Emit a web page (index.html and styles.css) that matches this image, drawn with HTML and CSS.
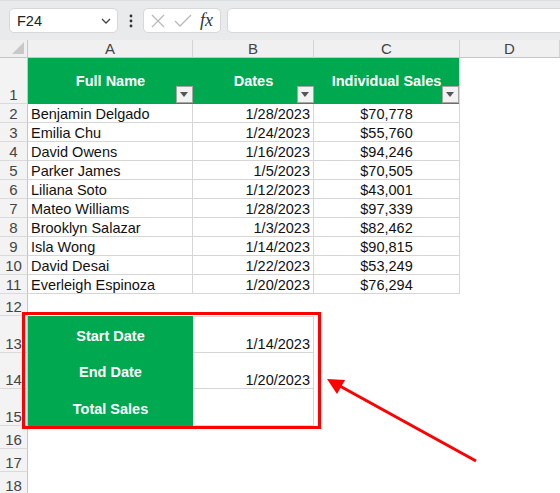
FILE: index.html
```html
<!DOCTYPE html>
<html lang="en">
<head>
    <meta charset="UTF-8">
    <title>Sales sheet</title>
    <link rel="stylesheet" href="styles.css">
</head>
<body>
    <div class="toolbar">
        <div class="name-box">
            <span>F24</span>
            <svg class="chevron" width="10" height="6" viewBox="0 0 10 6"><path d="M1 1 L5 5 L9 1" fill="none" stroke="#444" stroke-width="1.3"/></svg>
        </div>
        <div class="more">
            <svg width="4" height="14" viewBox="0 0 4 14"><circle cx="2" cy="2" r="1.4" fill="#333"/><circle cx="2" cy="7" r="1.4" fill="#333"/><circle cx="2" cy="12" r="1.4" fill="#333"/></svg>
        </div>
        <div class="fx-box">
            <svg width="14" height="14" viewBox="0 0 14 14"><path d="M1 1 L13 13 M13 1 L1 13" stroke="#b9b9b9" stroke-width="1.3"/></svg>
            <svg width="18" height="14" viewBox="0 0 18 14"><path d="M1 7 L6 12 L17 1" fill="none" stroke="#b9b9b9" stroke-width="1.3"/></svg>
            <span class="fx">fx</span>
        </div>
        <div class="formula"></div>
    </div>

    <div class="sheet">
        <div class="corner"><svg width="12" height="12" viewBox="0 0 12 12"><path d="M12 0 L12 12 L0 12 Z" fill="#c8c8c8"/></svg></div>
        <div class="ch">A</div>
        <div class="ch">B</div>
        <div class="ch">C</div>
        <div class="ch">D</div>

        <div class="rh">1</div>
        <div class="g">Full Name<span class="filter"></span></div>
        <div class="g">Dates<span class="filter"></span></div>
        <div class="g g-last">Individual Sales<span class="filter"></span></div>
        <div class="c"></div>

        <div class="rh">2</div><div class="t">Benjamin Delgado</div><div class="t num">1/28/2023</div><div class="t mid">$70,778</div><div class="c"></div>
        <div class="rh">3</div><div class="t">Emilia Chu</div><div class="t num">1/24/2023</div><div class="t mid">$55,760</div><div class="c"></div>
        <div class="rh">4</div><div class="t">David Owens</div><div class="t num">1/16/2023</div><div class="t mid">$94,246</div><div class="c"></div>
        <div class="rh">5</div><div class="t">Parker James</div><div class="t num">1/5/2023</div><div class="t mid">$70,505</div><div class="c"></div>
        <div class="rh">6</div><div class="t">Liliana Soto</div><div class="t num">1/12/2023</div><div class="t mid">$43,001</div><div class="c"></div>
        <div class="rh">7</div><div class="t">Mateo Williams</div><div class="t num">1/28/2023</div><div class="t mid">$97,339</div><div class="c"></div>
        <div class="rh">8</div><div class="t">Brooklyn Salazar</div><div class="t num">1/3/2023</div><div class="t mid">$82,462</div><div class="c"></div>
        <div class="rh">9</div><div class="t">Isla Wong</div><div class="t num">1/14/2023</div><div class="t mid">$90,815</div><div class="c"></div>
        <div class="rh">10</div><div class="t">David Desai</div><div class="t num">1/22/2023</div><div class="t mid">$53,249</div><div class="c"></div>
        <div class="rh">11</div><div class="t">Everleigh Espinoza</div><div class="t num">1/20/2023</div><div class="t mid">$76,294</div><div class="c"></div>

        <div class="rh">12</div><div class="c"></div><div class="c"></div><div class="c"></div><div class="c"></div>

        <div class="rh">13</div><div class="gl">Start Date</div><div class="t num first">1/14/2023</div><div class="c"></div><div class="c"></div>
        <div class="rh">14</div><div class="gl">End Date</div><div class="t num">1/20/2023</div><div class="c"></div><div class="c"></div>
        <div class="rh">15</div><div class="gl">Total Sales</div><div class="t num"></div><div class="c"></div><div class="c"></div>

        <div class="rh">16</div><div class="c"></div><div class="c"></div><div class="c"></div><div class="c"></div>
        <div class="rh">17</div><div class="c"></div><div class="c"></div><div class="c"></div><div class="c"></div>
        <div class="rh">18</div><div class="c"></div><div class="c"></div><div class="c"></div><div class="c"></div>
    </div>

    <div class="highlight"></div>
    <svg class="arrow" width="560" height="493" viewBox="0 0 560 493">
        <line x1="476" y1="461" x2="338" y2="385" stroke="#ff0000" stroke-width="3"/>
        <polygon points="327,379 345,380 337,394" fill="#ff0000"/>
    </svg>
</body>
</html>
```

FILE: styles.css
```css
body {
    margin: 0;
    width: 560px;
    height: 493px;
    overflow: hidden;
    position: relative;
    font-family: "Liberation Sans", Arial, sans-serif;
    background: #fff;
}

.toolbar {
    display: flex;
    align-items: flex-start;
    height: 40px;
    box-sizing: border-box;
    padding: 7px 0 0 9px;
    background: #e8eaec;
    border-top: 1px solid #dcdee0;
}

.name-box,
.fx-box,
.formula {
    height: 25px;
    box-sizing: border-box;
    background: #fff;
    border: 1px solid #d6d8da;
    border-radius: 5px;
}

.name-box {
    width: 109px;
    display: flex;
    align-items: center;
    justify-content: space-between;
    padding: 0 6px 0 7px;
    font-size: 14.5px;
    color: #222;
}

.more {
    width: 25px;
    height: 25px;
    display: flex;
    align-items: center;
    justify-content: center;
}

.fx-box {
    width: 78px;
    display: flex;
    align-items: center;
    padding: 0 0 0 7px;
    gap: 9px;
}

.fx {
    font-family: "Liberation Serif", "Times New Roman", serif;
    font-style: italic;
    font-size: 18px;
    color: #333;
    margin-left: -1px;
}

.formula {
    flex: 1;
    margin-left: 6px;
    margin-right: -10px;
}

.sheet {
    display: grid;
    grid-template-columns: 28px 165px 121px 146px 1fr;
    grid-template-rows: 18px 46px repeat(10, 19px) 22px 37px 36px 37px repeat(3, 23px);
    font-size: 14.5px;
    color: #111;
}

.sheet > div {
    box-sizing: border-box;
    white-space: nowrap;
    overflow: hidden;
}

.corner {
    background: #efefef;
    border-right: 1px solid #c6c6c6;
    border-bottom: 1px solid #c6c6c6;
    display: flex;
    align-items: flex-end;
    justify-content: flex-end;
    padding: 0 3px 3px 0;
}

.ch {
    background: #f0f0f0;
    border-right: 1px solid #d4d4d4;
    border-bottom: 1px solid #c6c6c6;
    text-align: center;
    font-size: 15px;
    line-height: 18px;
    color: #444;
}

.rh {
    background: #f3f3f3;
    border-right: 1px solid #c6c6c6;
    border-bottom: 1px solid #dadada;
    display: flex;
    align-items: flex-end;
    justify-content: center;
    font-size: 15px;
    line-height: 16px;
    color: #444;
}

.c {
    background: #fff;
}

.t {
    border-right: 1px solid #d6d6d6;
    border-bottom: 1px solid #d6d6d6;
    padding: 0 3px;
    display: flex;
    align-items: flex-end;
    line-height: 16px;
}

.t.first {
    border-top: 1px solid #d6d6d6;
}

.num {
    justify-content: flex-end;
}

.mid {
    justify-content: center;
}

.g {
    position: relative;
    background: #00a84f;
    color: #fff;
    font-weight: bold;
    display: flex;
    align-items: center;
    justify-content: center;
}

.g-last {
    border-right: 1px solid #d6d6d6;
}

.filter {
    position: absolute;
    right: 0;
    bottom: 1px;
    width: 17px;
    height: 17px;
    box-sizing: border-box;
    background: #f2f2f2;
    border: 1px solid #a6a6a6;
}

.filter::after {
    content: "";
    position: absolute;
    left: 3px;
    top: 5px;
    border-left: 4.5px solid transparent;
    border-right: 4.5px solid transparent;
    border-top: 5px solid #555;
}

.gl {
    background: #00a84f;
    color: #fff;
    font-weight: bold;
    display: flex;
    align-items: center;
    justify-content: center;
    padding-top: 2px;
}

.highlight {
    position: absolute;
    left: 22px;
    top: 312px;
    width: 299px;
    height: 117px;
    box-sizing: border-box;
    border: 3px solid #ff0000;
}

.arrow {
    position: absolute;
    left: 0;
    top: 0;
    pointer-events: none;
}
```
